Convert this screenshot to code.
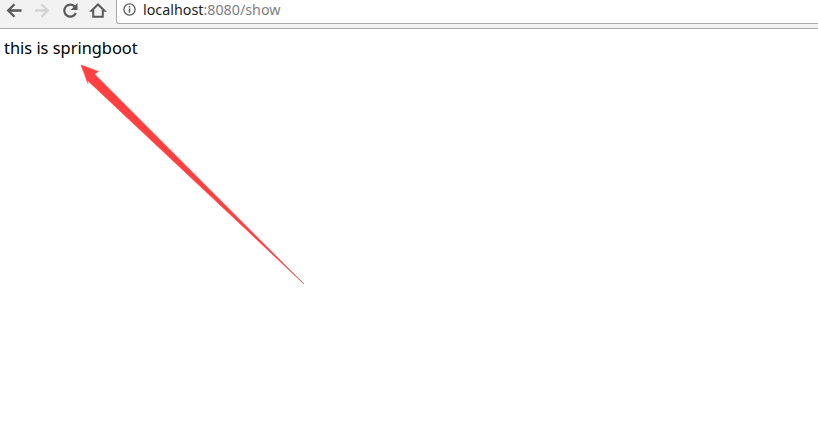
<script>
</script>

<div class="page">
  <header class="chrome">
    <nav class="nav">
      <svg class="ico" width="22" height="22" viewBox="0 0 22 22"><path d="M18.500 10.500H6.500M11.500 4.200 5.200 10.500l6.300 6.300" fill="none" stroke="#5a5a5a" stroke-width="2.300"/></svg>
      <svg class="ico" width="22" height="22" viewBox="0 0 22 22"><path d="M4 10.500h12.500M10.500 4.200l6.300 6.300-6.300 6.300" fill="none" stroke="#d2d2d2" stroke-width="2.300"/></svg>
      <svg class="ico" width="22" height="22" viewBox="0 0 22 22"><path d="M16.800 13a6 6 0 1 1-1.200-6.600" fill="none" stroke="#5a5a5a" stroke-width="2.300"/><path d="M18.500 3v7h-7z" fill="#5a5a5a"/></svg>
      <svg class="ico" width="22" height="22" viewBox="0 0 22 22"><path d="M4.500 10.800 11 4.500l6.500 6.300h-1.700v6H6.200v-6z" fill="none" stroke="#5a5a5a" stroke-width="2" stroke-linejoin="miter"/></svg>
    </nav>
    <div class="omnibox">
      <svg width="13" height="13" viewBox="0 0 13 13"><circle cx="6.500" cy="6.500" r="5.600" fill="none" stroke="#5a5a5a" stroke-width="1.300"/><path d="M6.500 5.400v4.400M6.500 3v1.500" stroke="#5a5a5a" stroke-width="1.500"/></svg>
      <span class="url"><span class="host">localhost</span>:8080/show</span>
    </div>
  </header>
  <div class="strip"></div>
  <main class="content">
    <p>this is springboot</p>
  </main>
  <svg class="arrow" width="818" height="433" viewBox="0 0 818 433"><path d="M81 65 98.500 71.500 94.500 74 304 284 86.500 79.500 88 83.500Z" fill="#ff4040" stroke="#ff4040" stroke-width=".6" stroke-linejoin="round"/></svg>
</div>

<style>
  :global(body) { margin: 0; background: #fff; }
  .page { position: relative; width: 818px; height: 433px; overflow: hidden; font-family: "Noto Sans", sans-serif; }
  .chrome { display: flex; height: 24px; background: #fff; }
  .nav { display: flex; gap: 6px; width: 116px; box-sizing: border-box; padding: 0 0 0 3px; background: #f2f2f2; align-items: flex-start; }
  .ico { flex: none; }
  .omnibox { flex: 1; display: flex; align-items: center; gap: 7px; padding-left: 6px; padding-bottom: 4px; border-left: 1px solid #a9a9a9; border-bottom: 1px solid #a9a9a9; border-bottom-left-radius: 3px; background: #fff; font-size: 14.3px; color: #808080; }
  .host { color: #222; }
  .strip { height: 4px; background: #f2f2f2; border-bottom: 1px solid #aaa; }
  .content { padding: 8px 4px 0; }
  p { margin: 0; font-size: 16.4px; line-height: 21px; color: #000; }
  .arrow { position: absolute; left: 0; top: 0; }
</style>
